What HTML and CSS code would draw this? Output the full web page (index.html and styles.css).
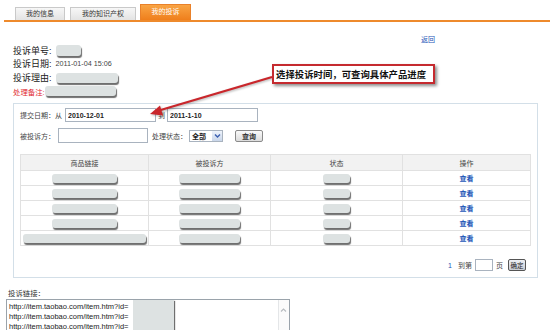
FILE: index.html
```html
<!DOCTYPE html>
<html lang="zh-CN">
<head>
  <meta charset="UTF-8" />
  <title>我的投诉</title>
  <link rel="stylesheet" href="styles.css">
</head>
<body>
  <div class="tabs">
    <span class="tab">我的信息</span>
    <span class="tab tab-wide">我的知识产权</span>
    <span class="tab active">我的投诉</span>
  </div>

  <div class="back"><a href="#">返回</a></div>

  <div class="info">
    <div class="info-row r1"><span class="label">投诉单号:</span><span class="pill pill-no"></span></div>
    <div class="info-row r2"><span class="label">投诉日期:</span><span class="date">2011-01-04 15:06</span></div>
    <div class="info-row r3"><span class="label">投诉理由:</span><span class="pill pill-reason"></span></div>
    <div class="info-row r4"><span class="note">处理备注:</span><span class="pill pill-note"></span></div>
  </div>

  <div class="filter">
    <div class="form-row row-date">
      <span class="flabel">提交日期：从</span>
      <input class="field" type="text" value="2010-12-01" />
      <span class="flabel to">到</span>
      <input class="field" type="text" value="2011-1-10" />
    </div>
    <div class="form-row row-party">
      <span class="flabel">被投诉方：</span>
      <input class="field" type="text" value="" />
      <span class="flabel status">处理状态：</span>
      <span class="select">全部<span class="caret"><svg width="9" height="10" viewBox="0 0 9 10"><path d="M2 3.5 L4.5 6 L7 3.5" fill="none" stroke="#3b5fb0" stroke-width="1.4"/></svg></span></span>
      <button class="btn">查询</button>
    </div>

    <table class="list">
      <thead>
        <tr><th class="c1">商品链接</th><th class="c2">被投诉方</th><th class="c3">状态</th><th class="c4">操作</th></tr>
      </thead>
      <tbody>
        <tr><td><span class="pill p-link"></span></td><td><span class="pill p-party"></span></td><td><span class="pill p-state"></span></td><td><a href="#">查看</a></td></tr>
        <tr><td><span class="pill p-link"></span></td><td><span class="pill p-party"></span></td><td><span class="pill p-state"></span></td><td><a href="#">查看</a></td></tr>
        <tr><td><span class="pill p-link"></span></td><td><span class="pill p-party"></span></td><td><span class="pill p-state"></span></td><td><a href="#">查看</a></td></tr>
        <tr><td><span class="pill p-link"></span></td><td><span class="pill p-party"></span></td><td><span class="pill p-state"></span></td><td><a href="#">查看</a></td></tr>
        <tr><td><span class="pill p-link-long"></span></td><td><span class="pill p-party"></span></td><td><span class="pill p-state"></span></td><td><a href="#">查看</a></td></tr>
      </tbody>
    </table>

    <div class="pager">
      <span class="page-num">1</span>
      <span>到第</span>
      <span class="page-input"></span>
      <span>页</span>
      <button class="btn-ok">确定</button>
    </div>
  </div>

  <div class="links-label">投诉链接：</div>
  <div class="links">
    <div class="link-line">http://item.taobao.com/item.htm?id=</div>
    <div class="link-line">http://item.taobao.com/item.htm?id=</div>
    <div class="link-line">http://item.taobao.com/item.htm?id=</div>
    <span class="links-mask"></span>
    <span class="scrollbar"><svg width="9" height="8" viewBox="0 0 9 8"><path d="M2 5.5 L4.5 3 L7 5.5" fill="none" stroke="#b8bcc0" stroke-width="1.2"/></svg></span>
  </div>

  <!-- 标注 -->
  <svg class="arrow" width="555" height="330" viewBox="0 0 555 330">
    <line x1="272" y1="77" x2="159" y2="110.5" stroke="#c9262b" stroke-width="2.2"/>
    <polygon points="150,114 163,115.6 160,105.6" fill="#c9262b"/>
  </svg>
  <div class="callout">选择投诉时间，可查询具体产品进度</div>
</body>
</html>
```

FILE: styles.css
```css
body {
  margin: 0;
  width: 555px;
  height: 330px;
  overflow: hidden;
  position: relative;
  background: #fff;
  color: #333;
  font-family: "Liberation Sans", "Noto Sans CJK SC", sans-serif;
}
a {
  color: #2356b8;
  text-decoration: none;
}

/* tabs */
.tabs {
  display: flex;
  align-items: flex-end;
  gap: 4px;
  height: 15px;
  padding: 5px 0 0 11px;
  margin: 0 5px 0 4px;
  border-bottom: 2px solid #ee8a2c;
}
.tab {
  width: 48px;
  height: 12px;
  line-height: 12px;
  text-align: center;
  font-size: 7px;
  color: #333;
  background: linear-gradient(#f7f7f7, #e3e3e3);
  border: 1px solid #c9c9c9;
  border-bottom: none;
}
.tab-wide {
  width: 64px;
  margin-left: 1px;
}
.tab.active {
  width: 49px;
  height: 15px;
  line-height: 13px;
  color: #fff;
  background: linear-gradient(#f9a444, #ef7f1c);
  border-color: #e9812a;
}

.back {
  width: 435px;
  height: 8px;
  margin-top: 14px;
  line-height: 8px;
  text-align: right;
  font-size: 7px;
}

/* complaint info */
.info {
  padding-left: 13px;
}
.info-row {
  display: flex;
  align-items: center;
  gap: 4px;
}
.r1 { height: 13px; }
.r2 { height: 13px; }
.r3 { height: 15px; }
.r4 { height: 12px; gap: 0; }
.label {
  font-size: 9px;
  color: #222;
}
.date {
  font-size: 7.2px;
  color: #444;
}
.note {
  font-size: 7.4px;
  color: #e0242c;
}
.pill {
  display: inline-block;
  height: 9px;
  border-radius: 3px;
  background: #dde2e2;
  box-shadow: 1px 2px 1px #6f6f6f;
}
.pill-no { width: 25px; height: 11px; }
.pill-reason { width: 62px; height: 10px; }
.pill-note { width: 71px; height: 10px; }

/* filter box */
.filter {
  width: 517px;
  height: 173px;
  margin: 6px 0 0 13px;
  padding-left: 6px;
  border: 1px solid #d3dfe8;
  position: relative;
}
.form-row {
  display: flex;
  align-items: center;
  height: 14px;
}
.row-date { margin-top: 4px; }
.row-party { margin-top: 6px; height: 15px; }
.flabel {
  font-size: 7px;
  color: #444;
  margin-right: 3px;
}
.to { margin-left: 2px; margin-right: 2px; }
.status { margin-left: 4px; margin-right: 2px; }
.field {
  box-sizing: border-box;
  width: 91px;
  height: 14px;
  padding: 0 2px;
  margin: 0;
  border: 1px solid #a9b3bf;
  font-family: "Liberation Sans", sans-serif;
  font-size: 7px;
  font-weight: bold;
  color: #222;
  background: #fff;
}
.row-party .field { height: 15px; width: 90px; }
.select {
  display: flex;
  align-items: center;
  justify-content: space-between;
  box-sizing: border-box;
  width: 34px;
  height: 12px;
  padding-left: 2px;
  border: 1px solid #a9b3bf;
  font-size: 7px;
  font-weight: bold;
  color: #222;
}
.caret {
  display: flex;
  align-items: center;
  justify-content: center;
  width: 10px;
  height: 10px;
  background: linear-gradient(#eef3fb, #c9d6ea);
}
.btn {
  box-sizing: border-box;
  width: 28px;
  height: 12px;
  margin-left: 12px;
  padding: 0;
  border: 1px solid #8a8a8a;
  border-radius: 2px;
  background: linear-gradient(#fafafa, #dcdcdc);
  font-family: "Noto Sans CJK SC", sans-serif;
  font-size: 7px;
  font-weight: bold;
  color: #333;
}

/* table */
.list {
  width: 506px;
  margin-top: 11px;
  border-collapse: collapse;
  table-layout: fixed;
  font-size: 7px;
}
.list th, .list td {
  border: 1px solid #e1e1e1;
  text-align: center;
  padding: 0;
}
.list th {
  height: 15px;
  background: #f2f2f2;
  font-weight: normal;
  color: #444;
}
.list td {
  height: 14px;
}
.list td .pill { vertical-align: middle; }
.list td a { font-weight: bold; }
.c1 { width: 127px; }
.c2 { width: 121px; }
.c3 { width: 131px; }
.c4 { width: 127px; }
.p-link { width: 65px; }
.p-link-long { width: 123px; }
.p-party { width: 61px; }
.p-state { width: 27px; }

/* pager */
.pager {
  display: flex;
  align-items: center;
  justify-content: flex-end;
  gap: 3px;
  height: 12px;
  margin-top: 13px;
  padding-right: 11px;
  font-size: 7px;
  color: #444;
}
.page-num { color: #2356b8; margin-right: 3px; }
.page-input {
  width: 18px;
  height: 12px;
  box-sizing: border-box;
  border: 1px solid #a9b3bf;
}
.btn-ok {
  box-sizing: border-box;
  width: 18px;
  height: 12px;
  margin-left: 2px;
  padding: 0;
  border: 1px solid #555;
  border-radius: 2px;
  background: linear-gradient(#eef0f4, #c9ccd4);
  font-family: "Noto Sans CJK SC", sans-serif;
  font-size: 6.5px;
  color: #222;
}

/* links */
.links-label {
  margin: 11px 0 0 8px;
  height: 9px;
  line-height: 9px;
  font-size: 7.4px;
  color: #333;
}
.links {
  position: relative;
  width: 284px;
  height: 40px;
  margin: 1px 0 0 6px;
  padding: 2px 0 0 2px;
  box-sizing: border-box;
  border: 1px solid #9aa3ab;
}
.link-line {
  height: 10px;
  line-height: 10px;
  font-size: 7.5px;
  color: #222;
}
.links-mask {
  position: absolute;
  left: 126px;
  top: 0;
  width: 41px;
  height: 40px;
  background: #dde2e2;
  box-shadow: 1px 1px 1px #6f6f6f;
}
.scrollbar {
  position: absolute;
  right: 0;
  top: 0;
  width: 10px;
  height: 40px;
  border-left: 1px solid #e4e6e8;
  background: #fbfbfb;
}

/* annotation */
.arrow {
  position: absolute;
  left: 0;
  top: 0;
  pointer-events: none;
  filter: drop-shadow(1px 1px 1px rgba(0,0,0,0.3));
}
.callout {
  position: absolute;
  left: 272px;
  top: 64px;
  width: 157px;
  height: 16px;
  line-height: 16px;
  padding-left: 2px;
  border: 2px solid #c52a2f;
  background: #fff;
  box-shadow: 2px 2px 3px rgba(0,0,0,0.45);
  font-family: "Noto Sans CJK SC", sans-serif;
  font-size: 9.4px;
  font-weight: bold;
  color: #111;
  white-space: nowrap;
}
```
